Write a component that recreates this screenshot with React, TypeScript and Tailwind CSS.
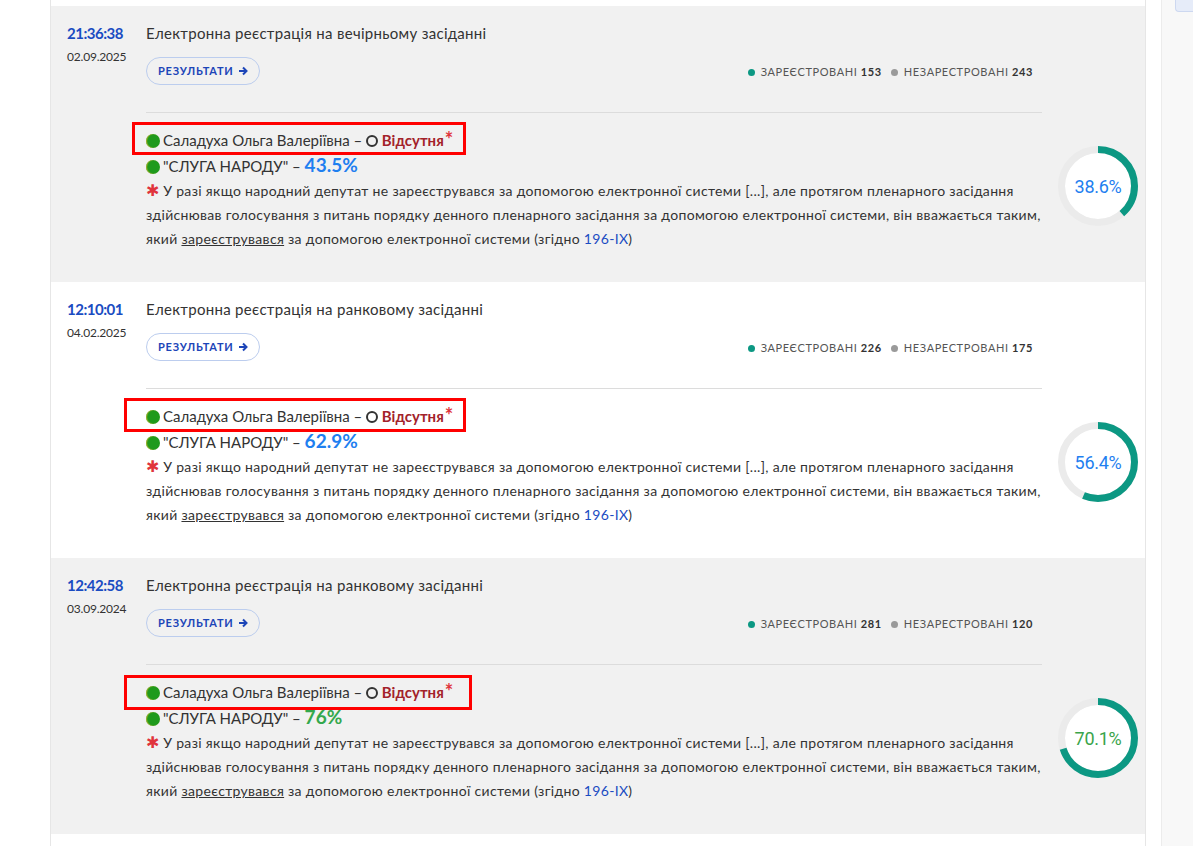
import React from "react";

type Row = {
  time: string;
  date: string;
  title: string;
  reg: number;
  unreg: number;
  party: string;
  partyGreen: boolean;
  pct: number;
  pctGreen: boolean;
  bg: string;
  box: string;
};

const rows: Row[] = [
  { time: "21:36:38", date: "02.09.2025", title: "Електронна реєстрація на вечірньому засіданні", reg: 153, unreg: 243, party: "43.5%", partyGreen: false, pct: 38.6, pctGreen: false, bg: "bg-[#f1f1f1]", box: "left-[-14px] right-[-22px] top-[-6px] bottom-[-3px]" },
  { time: "12:10:01", date: "04.02.2025", title: "Електронна реєстрація на ранковому засіданні", reg: 226, unreg: 175, party: "62.9%", partyGreen: false, pct: 56.4, pctGreen: false, bg: "bg-white", box: "left-[-22px] right-[-22px] top-[-6px] bottom-[-4px]" },
  { time: "12:42:58", date: "03.09.2024", title: "Електронна реєстрація на ранковому засіданні", reg: 281, unreg: 120, party: "76%", partyGreen: true, pct: 70.1, pctGreen: true, bg: "bg-[#f1f1f1]", box: "left-[-22px] right-[-28px] top-[-5px] bottom-[-6px]" },
];

function Ring({ pct, green }: { pct: number; green: boolean }) {
  const r = 36.5;
  const c = 2 * Math.PI * r;
  return (
    <div className="relative w-[80px] h-[80px]">
      <svg width="80" height="80" viewBox="0 0 80 80" className="absolute inset-0">
        <circle cx="40" cy="40" r="33" fill="#ffffff" />
        <circle cx="40" cy="40" r={r} fill="none" stroke="#ebebeb" strokeWidth="7" />
        <circle
          cx="40"
          cy="40"
          r={r}
          fill="none"
          stroke="#0c9883"
          strokeWidth="7"
          strokeDasharray={`${(c * pct) / 100} ${c}`}
          transform="rotate(-90 40 40)"
        />
      </svg>
      <div
        className={`absolute inset-0 flex items-center justify-center text-[18px] tracking-[-0.3px] ${green ? "text-[#3aa44a]" : "text-[#1f7ff0]"}`}
        style={{ fontFamily: "Roboto, sans-serif" }}
      >
        {pct}%
      </div>
    </div>
  );
}

function Dot() {
  return <span className="inline-block w-[14px] h-[14px] rounded-full bg-[#1f9a1c] shadow-[inset_1px_0_1px_rgba(200,180,40,0.8)] mr-[3px] align-[-2px]" />;
}

function RowView({ r }: { r: Row }) {
  return (
    <div className={`${r.bg} h-[276px] flex pl-[16px] pt-[17px]`}>
      <div className="w-[79px] shrink-0">
        <div className="text-[15px] leading-[20px] font-bold text-[#1a4cc2] tracking-[-0.5px]">{r.time}</div>
        <div className="text-[12px] leading-[20px] mt-[4px] text-[#333] tracking-[-0.2px]">{r.date}</div>
      </div>
      <div className="flex-1">
        <div className="w-[896px]">
          <div className="text-[15px] leading-[20px] text-[#333] tracking-[0.3px]">{r.title}</div>
          <div className="flex items-center justify-between mt-[14px] pr-[9px]">
            <button className="h-[28px] px-[11px] rounded-full border border-[#bccdee] text-[11px] font-bold text-[#1c45b8] tracking-[0.8px] flex items-center gap-[4px]">
              РЕЗУЛЬТАТИ
              <svg width="10" height="10" viewBox="0 0 10 10"><path d="M1 5h7M5 1.5L8.5 5 5 8.5" stroke="#1c45b8" strokeWidth="2" fill="none" /></svg>
            </button>
            <div className="flex items-center text-[11px] text-[#555] tracking-[0.6px] mt-[2px]">
              <span className="w-[7px] h-[7px] rounded-full bg-[#0c9883] mr-[6px]" />
              ЗАРЕЄСТРОВАНІ&nbsp;<b className="text-[#333]">{r.reg}</b>
              <span className="w-[7px] h-[7px] rounded-full bg-[#9a9a9a] ml-[9px] mr-[6px]" />
              НЕЗАРЕСТРОВАНІ&nbsp;<b className="text-[#333]">{r.unreg}</b>
            </div>
          </div>
          <div className="h-px bg-[#dcdcdc] mt-[27px]" />
        </div>
        <div className="flex">
          <div className="w-[896px] mt-[15px] text-[#333]">
            <div className="relative inline-block text-[15px] leading-[24px]">
              <div className={`absolute ${r.box} border-[3px] border-[#ff0000]`} />
              <Dot />
              Саладуха Ольга Валеріївна –{" "}
              <span className="inline-block w-[12px] h-[12px] rounded-full border-2 border-[#333] align-[-1px]" />{" "}
              <b className="text-[#a3222a]">Відсутня</b>
              <span className="absolute text-[#e0343c] text-[20px] font-bold leading-none top-[1px] ml-[1px]">*</span>
            </div>
            <div className="text-[15px] leading-[25px]">
              <Dot />
              "СЛУГА НАРОДУ" –{" "}
              <b className={`text-[19px] ${r.partyGreen ? "text-[#33a84c]" : "text-[#1f7ff0]"}`}>{r.party}</b>
            </div>
            <div className="text-[14px] leading-[24px] mt-[-1px] tracking-[0.32px]">
              <span className="text-[#e0343c] text-[16px]">✱</span> У разі якщо народний депутат не зареєструвався за допомогою електронної системи [...], але протягом пленарного засідання
              <br />
              здійснював голосування з питань порядку денного пленарного засідання за допомогою електронної системи, він вважається таким,
              <br />
              який <span className="underline">зареєструвався</span> за допомогою електронної системи (згідно <span className="text-[#1a4cc2]">196-IX</span>)
            </div>
          </div>
          <div className="ml-[16px] mt-[33px]">
            <Ring pct={r.pct} green={r.pctGreen} />
          </div>
        </div>
      </div>
    </div>
  );
}

export default function App() {
  return (
    <div className="flex min-h-[846px] bg-white" style={{ fontFamily: "Lato, 'Noto Sans', sans-serif" }}>
      <div className="w-[50px] shrink-0" />
      <div className="w-[1096px] shrink-0 border-x border-[#e6e6e6] pt-[6px]">
        {rows.map((r, i) => (
          <RowView key={i} r={r} />
        ))}
      </div>
      <div className="w-[15px] shrink-0" />
      <div className="w-[32px] shrink-0 bg-[#f8f8f8] border-l border-[#ececec] relative">
        <div className="absolute right-0 top-0 w-[18px] h-[12px] bg-[#e6ecf9] border-l border-b border-[#cdd8f0] rounded-bl-[4px]" />
      </div>
    </div>
  );
}
